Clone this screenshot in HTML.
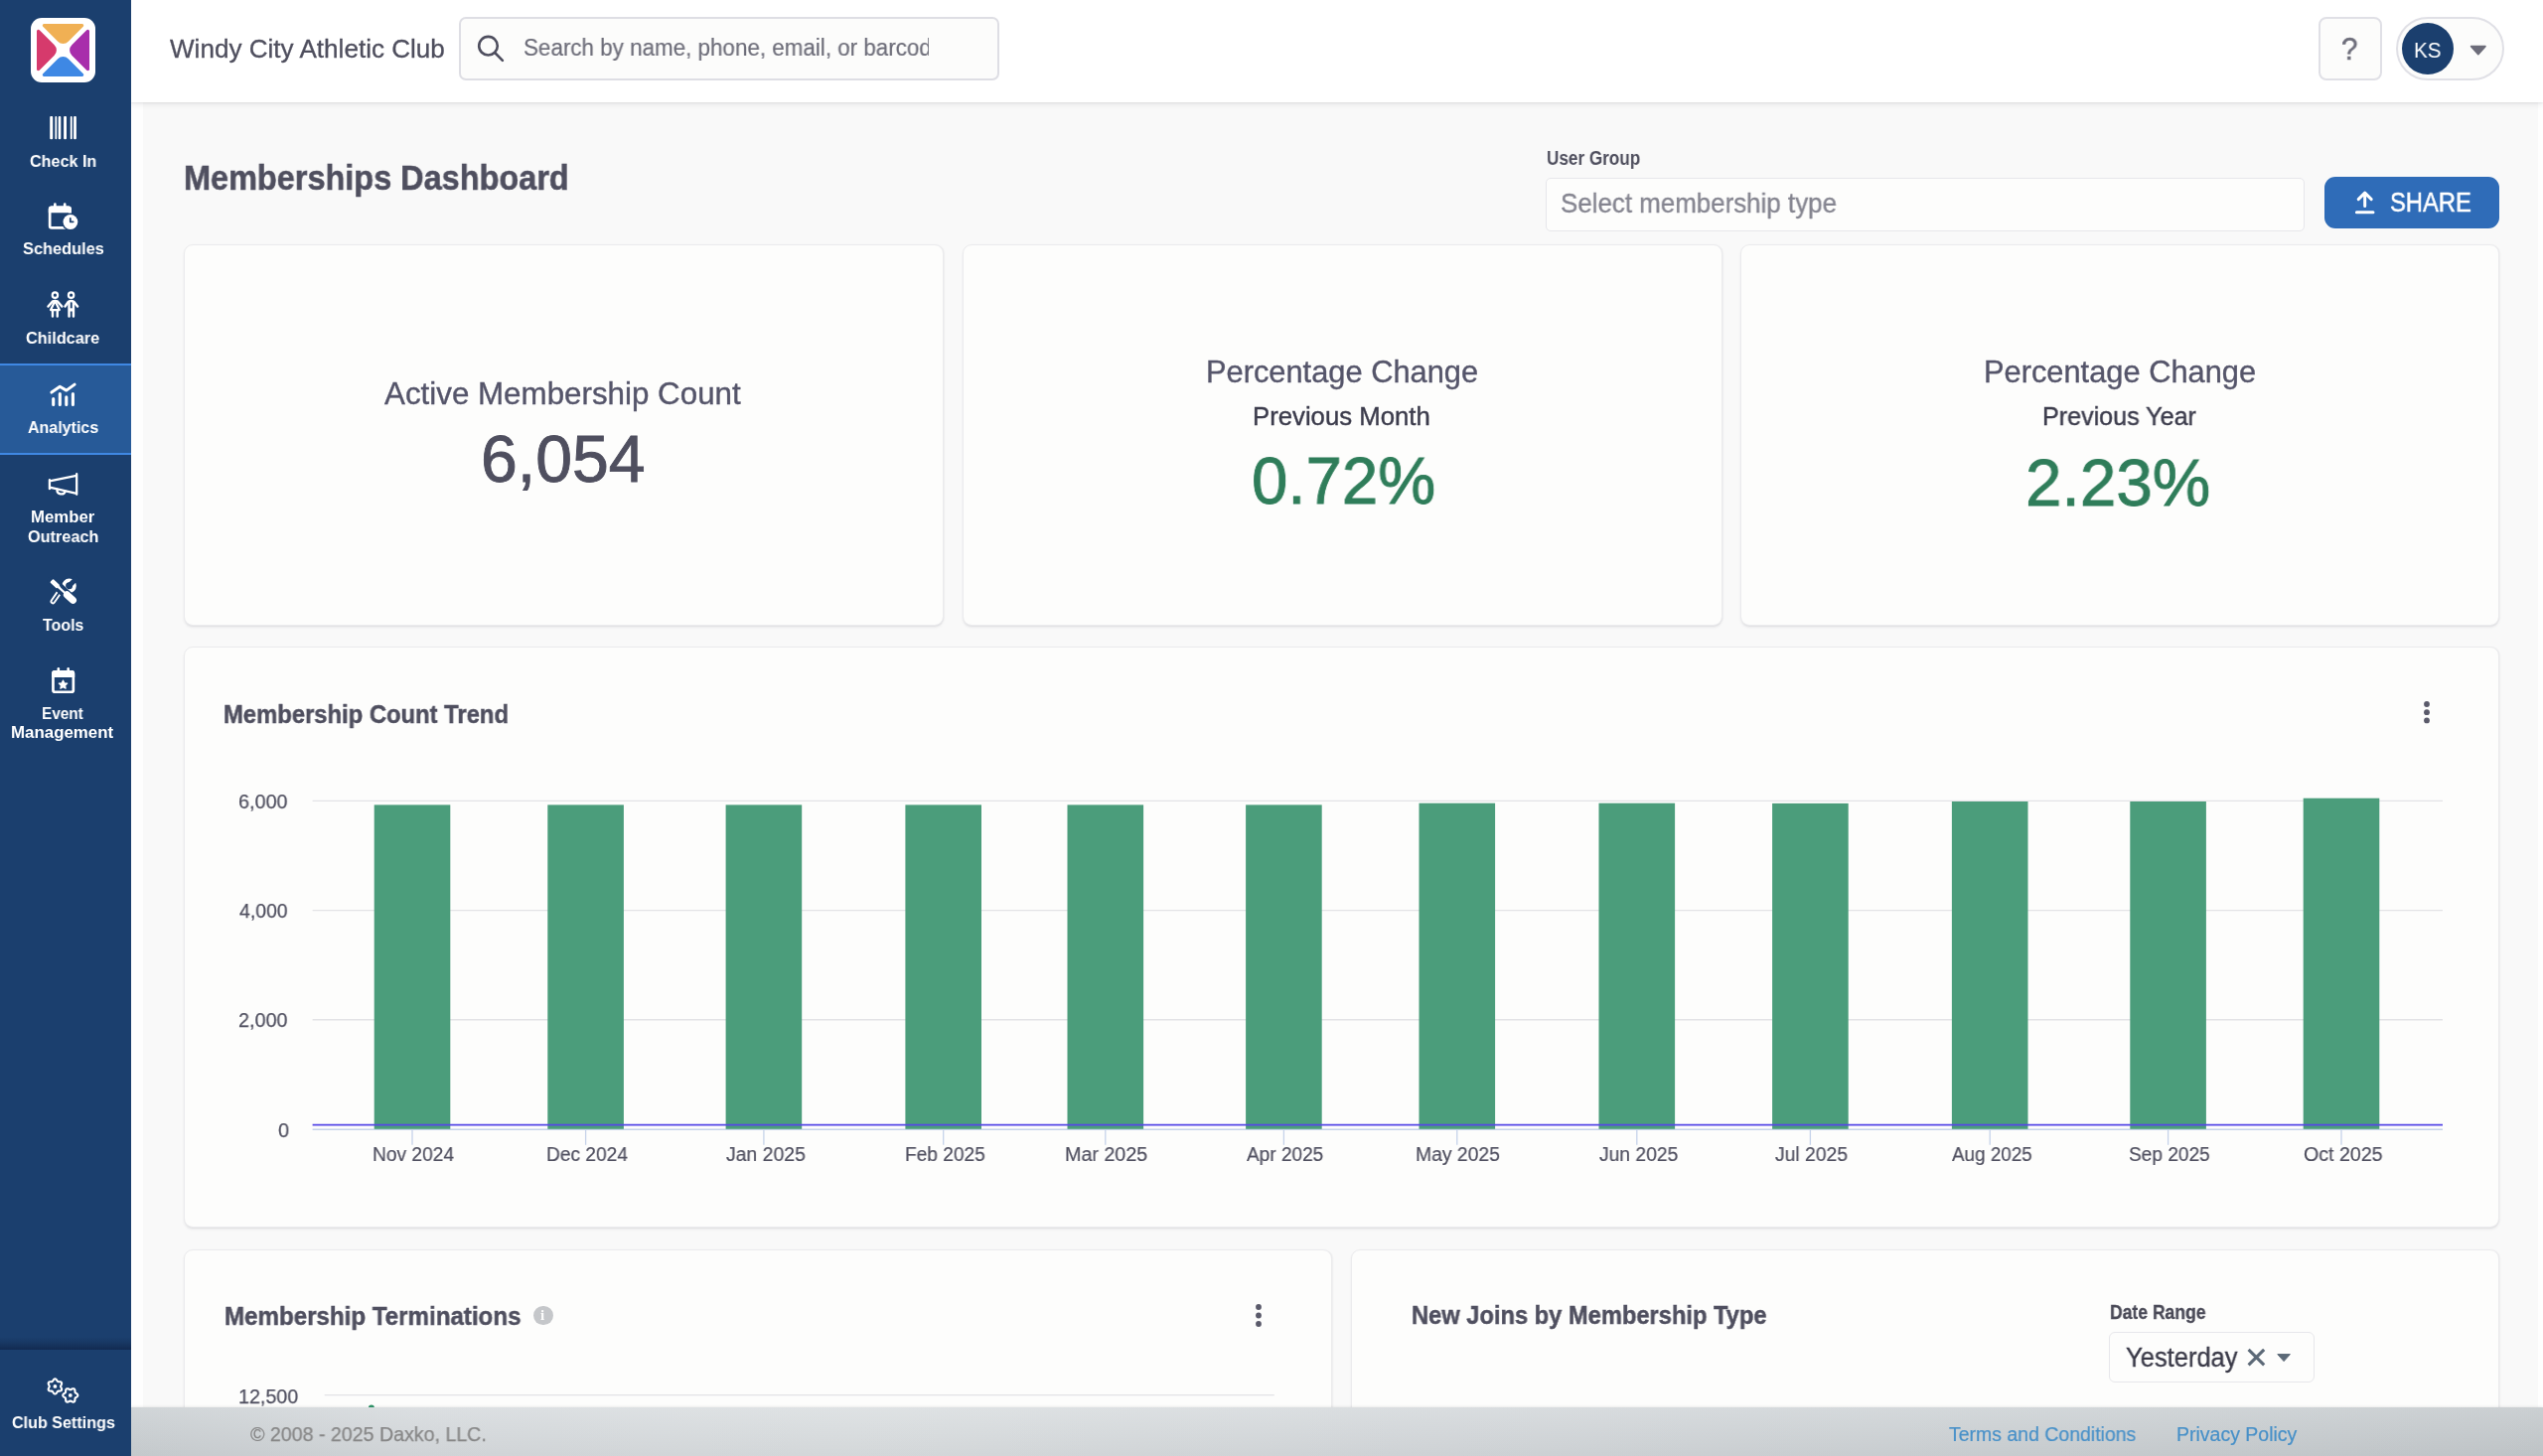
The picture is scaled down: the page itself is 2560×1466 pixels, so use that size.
<!DOCTYPE html>
<html lang="en">
<head>
<meta charset="utf-8">
<title>Memberships Dashboard - Windy City Athletic Club</title>
<style>
html,body{margin:0;padding:0;background:#fff;}
body{width:2560px;height:1466px;overflow:hidden;font-family:"Liberation Sans",Arial,Helvetica,sans-serif;}
#app{position:relative;width:2560px;height:1466px;overflow:hidden;background:#fefefe;}
#app *{box-sizing:border-box;}
.a{position:absolute;}
.t{will-change:transform;text-decoration:none;font-style:normal;position:absolute;white-space:nowrap;line-height:1;transform-origin:0 0;display:block;margin:0;padding:0;letter-spacing:0;}
svg{position:absolute;overflow:visible;}
/* layout blocks */
.mainbg{left:144px;top:102px;width:2411px;height:1316px;background:#f9f9f9;}
.topbar{left:132px;top:0;width:2428px;height:102.5px;background:#ffffff;box-shadow:0 1px 2px rgba(40,40,60,.07),0 2px 7px rgba(40,40,60,.09);}
.sidebar{left:0;top:0;width:132px;height:1466px;background:#1b3f6e;}
.navactive{left:0;top:366px;width:132px;height:92px;background:#275a98;border-top:2.5px solid #3f88e3;border-bottom:2.5px solid #3f88e3;}
.sidefoot{left:0;top:1346px;width:132px;height:12.5px;background:linear-gradient(to bottom,rgba(9,22,52,0) 0%,rgba(9,22,52,.18) 45%,rgba(9,22,52,.5) 100%);}
.logo{left:31px;top:18px;width:65px;height:65px;border-radius:11px;background:#fff;}
.search{left:462px;top:17px;width:544px;height:64px;border:2px solid #dedee4;border-radius:7px;background:#fcfcfb;}
.helpbtn{left:2334px;top:17px;width:64px;height:64px;border:2px solid #e0e0e6;border-radius:8px;background:#fcfcfb;}
.userpill{left:2412px;top:17px;width:108.5px;height:64px;border:2px solid #e0e0e6;border-radius:32px;background:#fcfcfb;}
.avatar{left:2418px;top:23px;width:52px;height:52px;border-radius:50%;background:#1b3f6e;}
.selbox{left:1556px;top:178.5px;width:764px;height:54px;border:1.5px solid #e7e7eb;border-radius:5px;background:#fdfdfc;}
.sharebtn{left:2340px;top:178px;width:176px;height:52px;border-radius:11px;background:#2f6cb8;}
.card{background:#fdfdfc;border:1px solid #ebebed;border-radius:9px;box-shadow:0 2px 3px -1px rgba(40,40,60,.15),1px 0 2px -1px rgba(40,40,60,.10);}
.k1{left:185px;top:246px;width:764.5px;height:384px;}
.k2{left:969px;top:246px;width:764.5px;height:384px;}
.k3{left:1752px;top:246px;width:763.5px;height:384px;}
.chart{left:185px;top:651px;width:2330.5px;height:585px;}
.term{left:185px;top:1258px;width:1155.5px;height:260px;}
.joins{left:1360px;top:1258px;width:1155.5px;height:260px;}
.datesel{left:2123px;top:1341px;width:206.5px;height:51px;border:1.5px solid #e7e7eb;border-radius:6px;background:#fdfdfc;}
.footer{left:132px;top:1417px;width:2428px;height:49px;background:linear-gradient(to bottom,rgba(255,255,255,.10),rgba(0,0,0,.035)),linear-gradient(to right,#cbd0d3 0%,#d7dbde 12%,#dbdfe1 30%,#d5d9dc 55%,#cdd2d5 80%,#c5cacd 100%);box-shadow:0 -1px 2px rgba(0,0,0,.07);}
.clip{overflow:hidden;}
</style>
</head>
<body>
<div id="app">

<main>
  <div class="a mainbg"></div>
  <h1 class="t" id="title" style="left:184.58px;top:160.76px;font-size:35.25px;font-weight:700;color:#4f4f5f;transform:scaleX(0.9206);-webkit-text-stroke-width:0.5px;">Memberships Dashboard</h1>
  <label><span class="t" id="ug" style="left:1556.59px;top:148.87px;font-size:20px;font-weight:700;color:#4e4e5d;transform:scaleX(0.8570);">User Group</span></label>
  <div class="a selbox"></div><span class="t" id="sel" style="left:1571.01px;top:190.98px;font-size:27.25px;font-weight:400;color:#858590;transform:scaleX(0.9508);-webkit-text-stroke-width:0.35px;">Select membership type</span>
  <div class="a sharebtn"></div><svg class="a" style="left:2368px;top:190px" width="26" height="28" viewBox="2368 190 26 28" ><g fill="none" stroke="#fff" stroke-width="3" stroke-linecap="round" stroke-linejoin="round"><path d="M2380.7,194.4 V207.6 M2374.2,200.6 L2380.7,194.1 L2387.2,200.6 M2372.4,213.7 H2389"/></g></svg><span class="t" id="share" style="left:2406.41px;top:189.82px;font-size:27.5px;font-weight:400;color:#ffffff;transform:scaleX(0.8638);-webkit-text-stroke:0.5px #fff;">SHARE</span>

  <section>
    <div class="a card k1"></div><span class="t" id="k1l" style="left:387.24px;top:380.78px;font-size:30.5px;font-weight:400;color:#55556a;transform:scaleX(1.0272);-webkit-text-stroke-width:0.35px;">Active Membership Count</span><strong class="t" id="k1v" style="left:484.25px;top:428.59px;font-size:66px;font-weight:400;color:#4f4f5f;transform:scaleX(1.0022);-webkit-text-stroke-width:0.9px;">6,054</strong>
    <div class="a card k2"></div><span class="t" id="k2l" style="left:1214.06px;top:359.67px;font-size:30.75px;font-weight:400;color:#55556a;transform:scaleX(1.0020);-webkit-text-stroke-width:0.35px;">Percentage Change</span><span class="t" id="k2s" style="left:1260.70px;top:406.71px;font-size:25.5px;font-weight:400;color:#3c3c4c;transform:scaleX(1.0090);-webkit-text-stroke-width:0.4px;">Previous Month</span><strong class="t" id="k2v" style="left:1259.83px;top:450.44px;font-size:67px;font-weight:400;color:#2f7d5a;transform:scaleX(0.9744);-webkit-text-stroke-width:0.9px;">0.72%</strong>
    <div class="a card k3"></div><span class="t" id="k3l" style="left:1997.26px;top:359.67px;font-size:30.75px;font-weight:400;color:#55556a;transform:scaleX(1.0020);-webkit-text-stroke-width:0.35px;">Percentage Change</span><span class="t" id="k3s" style="left:2055.75px;top:406.71px;font-size:25.5px;font-weight:400;color:#3c3c4c;transform:scaleX(0.9846);-webkit-text-stroke-width:0.4px;">Previous Year</span><strong class="t" id="k3v" style="left:2039.48px;top:451.54px;font-size:67px;font-weight:400;color:#2f7d5a;transform:scaleX(0.9795);-webkit-text-stroke-width:0.9px;">2.23%</strong>
  </section>

  <section>
    <div class="a card chart"></div>
    <h2 class="t" id="c1t" style="left:225.23px;top:706.59px;font-size:25.0px;font-weight:700;color:#4f4f5f;transform:scaleX(0.9521);-webkit-text-stroke-width:0.45px;">Membership Count Trend</h2><svg class="a" style="left:2438.6px;top:705.2px" width="8" height="24.399999999999977" viewBox="2438.6 705.2 8 24.399999999999977" ><circle cx="2442.6" cy="709.2" r="2.9" fill="#5a5a6a"/><circle cx="2442.6" cy="717.4" r="2.9" fill="#5a5a6a"/><circle cx="2442.6" cy="725.6" r="2.9" fill="#5a5a6a"/></svg>
    <svg class="a" style="left:186px;top:760px" width="2330" height="420" viewBox="186 760 2330 420" ><line x1="314.6" x2="2459" y1="806.4" y2="806.4" stroke="#e3e3e6" stroke-width="1.4"/><line x1="314.6" x2="2459" y1="916.6" y2="916.6" stroke="#e3e3e6" stroke-width="1.4"/><line x1="314.6" x2="2459" y1="1026.8" y2="1026.8" stroke="#e3e3e6" stroke-width="1.4"/><line x1="314.6" x2="2459" y1="1137.3" y2="1137.3" stroke="#c6d3ea" stroke-width="1.4"/><line x1="415" x2="415" y1="1137.3" y2="1152.8" stroke="#c6d3ea" stroke-width="1.3"/><line x1="589.6" x2="589.6" y1="1137.3" y2="1152.8" stroke="#c6d3ea" stroke-width="1.3"/><line x1="768.9" x2="768.9" y1="1137.3" y2="1152.8" stroke="#c6d3ea" stroke-width="1.3"/><line x1="949.7" x2="949.7" y1="1137.3" y2="1152.8" stroke="#c6d3ea" stroke-width="1.3"/><line x1="1112.8" x2="1112.8" y1="1137.3" y2="1152.8" stroke="#c6d3ea" stroke-width="1.3"/><line x1="1292.4" x2="1292.4" y1="1137.3" y2="1152.8" stroke="#c6d3ea" stroke-width="1.3"/><line x1="1466.8" x2="1466.8" y1="1137.3" y2="1152.8" stroke="#c6d3ea" stroke-width="1.3"/><line x1="1647.8" x2="1647.8" y1="1137.3" y2="1152.8" stroke="#c6d3ea" stroke-width="1.3"/><line x1="1822.4" x2="1822.4" y1="1137.3" y2="1152.8" stroke="#c6d3ea" stroke-width="1.3"/><line x1="2003.2" x2="2003.2" y1="1137.3" y2="1152.8" stroke="#c6d3ea" stroke-width="1.3"/><line x1="2182.6" x2="2182.6" y1="1137.3" y2="1152.8" stroke="#c6d3ea" stroke-width="1.3"/><line x1="2357" x2="2357" y1="1137.3" y2="1152.8" stroke="#c6d3ea" stroke-width="1.3"/><rect x="376.7" y="810.4" width="76.6" height="326.4" fill="#4b9d7b"/><rect x="551.3" y="810.4" width="76.6" height="326.4" fill="#4b9d7b"/><rect x="730.6" y="810.4" width="76.6" height="326.4" fill="#4b9d7b"/><rect x="911.4" y="810.4" width="76.6" height="326.4" fill="#4b9d7b"/><rect x="1074.5" y="810.4" width="76.6" height="326.4" fill="#4b9d7b"/><rect x="1254.1" y="810.4" width="76.6" height="326.4" fill="#4b9d7b"/><rect x="1428.5" y="808.7" width="76.6" height="328.1" fill="#4b9d7b"/><rect x="1609.5" y="808.7" width="76.6" height="328.1" fill="#4b9d7b"/><rect x="1784.1" y="808.9" width="76.6" height="327.9" fill="#4b9d7b"/><rect x="1964.9" y="807" width="76.6" height="329.8" fill="#4b9d7b"/><rect x="2144.3" y="807" width="76.6" height="329.8" fill="#4b9d7b"/><rect x="2318.7" y="803.7" width="76.6" height="333.1" fill="#4b9d7b"/><line x1="314.6" x2="2459" y1="1132.6" y2="1132.6" stroke="#5647e6" stroke-width="1.9"/></svg>
    <span class="t" id="y6" style="left:240.24px;top:795.62px;font-size:21.0px;font-weight:400;color:#4f4f5f;transform:scaleX(0.9440);-webkit-text-stroke-width:0.25px;">6,000</span><span class="t" id="y4" style="left:241.00px;top:906.42px;font-size:21.0px;font-weight:400;color:#4f4f5f;transform:scaleX(0.9260);-webkit-text-stroke-width:0.25px;">4,000</span><span class="t" id="y2" style="left:240.39px;top:1016.22px;font-size:21.0px;font-weight:400;color:#4f4f5f;transform:scaleX(0.9431);-webkit-text-stroke-width:0.25px;">2,000</span><span class="t" id="y0" style="left:279.66px;top:1127.02px;font-size:21.0px;font-weight:400;color:#4f4f5f;transform:scaleX(0.9453);-webkit-text-stroke-width:0.25px;">0</span>
    <span class="t" id="xNov" style="left:375.49px;top:1152.07px;font-size:20px;font-weight:400;color:#4f4f5f;transform:scaleX(0.9586);-webkit-text-stroke-width:0.2px;">Nov 2024</span><span class="t" id="xDec" style="left:550.01px;top:1152.07px;font-size:20px;font-weight:400;color:#4f4f5f;transform:scaleX(0.9575);-webkit-text-stroke-width:0.2px;">Dec 2024</span><span class="t" id="xJan" style="left:730.71px;top:1152.07px;font-size:20px;font-weight:400;color:#4f4f5f;transform:scaleX(0.9700);-webkit-text-stroke-width:0.2px;">Jan 2025</span><span class="t" id="xFeb" style="left:911.01px;top:1152.07px;font-size:20px;font-weight:400;color:#4f4f5f;transform:scaleX(0.9551);-webkit-text-stroke-width:0.2px;">Feb 2025</span><span class="t" id="xMar" style="left:1071.93px;top:1152.07px;font-size:20px;font-weight:400;color:#4f4f5f;transform:scaleX(0.9852);-webkit-text-stroke-width:0.2px;">Mar 2025</span><span class="t" id="xApr" style="left:1255.46px;top:1152.07px;font-size:20px;font-weight:400;color:#4f4f5f;transform:scaleX(0.9512);-webkit-text-stroke-width:0.2px;">Apr 2025</span><span class="t" id="xMay" style="left:1424.95px;top:1152.07px;font-size:20px;font-weight:400;color:#4f4f5f;transform:scaleX(0.9668);-webkit-text-stroke-width:0.2px;">May 2025</span><span class="t" id="xJun" style="left:1610.21px;top:1152.07px;font-size:20px;font-weight:400;color:#4f4f5f;transform:scaleX(0.9634);-webkit-text-stroke-width:0.2px;">Jun 2025</span><span class="t" id="xJul" style="left:1787.20px;top:1152.07px;font-size:20px;font-weight:400;color:#4f4f5f;transform:scaleX(0.9663);-webkit-text-stroke-width:0.2px;">Jul 2025</span><span class="t" id="xAug" style="left:1964.95px;top:1152.07px;font-size:20px;font-weight:400;color:#4f4f5f;transform:scaleX(0.9423);-webkit-text-stroke-width:0.2px;">Aug 2025</span><span class="t" id="xSep" style="left:2143.29px;top:1152.07px;font-size:20px;font-weight:400;color:#4f4f5f;transform:scaleX(0.9540);-webkit-text-stroke-width:0.2px;">Sep 2025</span><span class="t" id="xOct" style="left:2318.83px;top:1152.07px;font-size:20px;font-weight:400;color:#4f4f5f;transform:scaleX(0.9801);-webkit-text-stroke-width:0.2px;">Oct 2025</span>
  </section>

  <section>
    <div class="a card term"></div>
    <h2 class="t" id="c2t" style="left:226.24px;top:1313.04px;font-size:25.0px;font-weight:700;color:#4f4f5f;transform:scaleX(0.9649);-webkit-text-stroke-width:0.45px;">Membership Terminations</h2>
    <div class="a" style="left:537.3px;top:1314.5px;width:19.8px;height:19.8px;border-radius:50%;background:#c5c7ca;"></div>
    <span class="t" style="left:544.4px;top:1316.6px;font-size:15px;font-weight:700;color:#fdfdfc;font-family:'Liberation Serif',serif;">i</span>
    <svg class="a" style="left:1263.2px;top:1311.9px" width="8" height="25.0" viewBox="1263.2 1311.9 8 25.0" ><circle cx="1267.2" cy="1315.9" r="2.9" fill="#5a5a6a"/><circle cx="1267.2" cy="1324.4" r="2.9" fill="#5a5a6a"/><circle cx="1267.2" cy="1332.9" r="2.9" fill="#5a5a6a"/></svg>
    <svg class="a" style="left:300px;top:1396px" width="1000" height="30" viewBox="300 1396 1000 30" ><line x1="326.7" x2="1282.8" y1="1404.6" y2="1404.6" stroke="#e3e3e6" stroke-width="1.4"/><circle cx="373.9" cy="1417.5" r="3" fill="#2f9469"/></svg>
    <span class="t" id="y125" style="left:240.33px;top:1394.52px;font-size:21.0px;font-weight:400;color:#4f4f5f;transform:scaleX(0.9386);-webkit-text-stroke-width:0.25px;">12,500</span>
  </section>

  <section>
    <div class="a card joins"></div>
    <h2 class="t" id="c3t" style="left:1420.94px;top:1312.34px;font-size:25.0px;font-weight:700;color:#4f4f5f;transform:scaleX(0.9473);-webkit-text-stroke-width:0.45px;">New Joins by Membership Type</h2>
    <label><span class="t" id="dr" style="left:2124.14px;top:1310.77px;font-size:20px;font-weight:700;color:#4a4a57;transform:scaleX(0.8767);-webkit-text-stroke-width:0.3px;">Date Range</span></label>
    <div class="a datesel"></div><span class="t" id="yest" style="left:2139.77px;top:1353.21px;font-size:27.75px;font-weight:400;color:#3a3a48;transform:scaleX(0.9193);-webkit-text-stroke-width:0.35px;">Yesterday</span><svg class="a" style="left:2260px;top:1356px" width="24" height="22" viewBox="2260 1356 24 22" ><path d="M2263.6,1358.8 L2279.2,1374.4 M2279.2,1358.8 L2263.6,1374.4" stroke="#5c6977" stroke-width="3.1" fill="none"/></svg><svg class="a" style="left:2290px;top:1360px" width="18" height="12" viewBox="2290 1360 18 12" ><path d="M2292.8,1363.6 H2305.4 L2299.1,1370.6 Z" fill="#5c6977" stroke="#5c6977" stroke-width="1" stroke-linejoin="round"/></svg>
  </section>
</main>

<footer>
  <div class="a footer"></div>
  <span class="t" id="copy" style="left:252.00px;top:1435.03px;font-size:19.75px;font-weight:400;color:#868686;transform:scaleX(0.9922);-webkit-text-stroke-width:0.25px;">© 2008 - 2025 Daxko, LLC.</span><a href="#" class="t" id="terms" style="left:1962.14px;top:1435.09px;font-size:19.5px;font-weight:400;color:#4790c8;transform:scaleX(0.9980);-webkit-text-stroke-width:0.2px;">Terms and Conditions</a><a href="#" class="t" id="priv" style="left:2190.58px;top:1435.09px;font-size:19.5px;font-weight:400;color:#4790c8;transform:scaleX(0.9968);-webkit-text-stroke-width:0.2px;">Privacy Policy</a>
</footer>

<header>
  <div class="a topbar"></div>
  <span class="t" id="club" style="left:171.03px;top:36.86px;font-size:25.5px;font-weight:400;color:#4f4f5e;transform:scaleX(1.0229);-webkit-text-stroke-width:0.3px;">Windy City Athletic Club</span>
  <div class="a search"></div><svg class="a" style="left:476px;top:32px" width="36" height="34" viewBox="476 32 36 34" ><g fill="none" stroke="#4e4e5e" stroke-width="2.6" stroke-linecap="round"><circle cx="491.5" cy="46.2" r="9.3"/><path d="M498.6,53.5 L505.9,60.8"/></g></svg><div class="a clip" style="left:520px;top:20px;width:415.2px;height:58px;"><span class="t" id="srch" style="left:7.04px;top:17.03px;font-size:23px;font-weight:400;color:#6d6d79;transform:scaleX(0.9738);-webkit-text-stroke-width:0.2px;">Search by name, phone, email, or barcode</span></div>
  <div class="a helpbtn"></div><span class="t" id="help" style="left:2357.01px;top:34.01px;font-size:31.0px;font-weight:400;color:#6d6d7a;transform:scaleX(0.9568);-webkit-text-stroke:0.5px #6d6d7a;">?</span>
  <div class="a userpill"></div><div class="a avatar"></div><span class="t" id="ks" style="left:2430.23px;top:39.59px;font-size:21.75px;font-weight:400;color:#ffffff;transform:scaleX(0.9485);">KS</span><svg class="a" style="left:2484px;top:44px" width="22" height="14" viewBox="2484 44 22 14" ><path d="M2487.6,46.6 H2502 L2494.8,54.6 Z" fill="#6d6d7a" stroke="#6d6d7a" stroke-width="1.6" stroke-linejoin="round"/></svg>
</header>

<nav>
  <div class="a sidebar"></div>
  <div class="a logo"></div><svg class="a" style="left:31px;top:18px" width="65" height="65" viewBox="31 18 65 65" ><path d="M43.23,26.73 A1.6,1.6 0 0 1 44.36,24.00 L82.64,24.00 A1.6,1.6 0 0 1 83.77,26.73 L68.80,41.70 A7.5,7.5 0 0 1 58.20,41.70 Z" fill="#f0b054"/><path d="M83.77,74.27 A1.6,1.6 0 0 1 82.64,77.00 L44.36,77.00 A1.6,1.6 0 0 1 43.23,74.27 L58.20,59.30 A7.5,7.5 0 0 1 68.80,59.30 Z" fill="#3e88e4"/><path d="M39.73,70.77 A1.6,1.6 0 0 1 37.00,69.64 L37.00,31.36 A1.6,1.6 0 0 1 39.73,30.23 L54.70,45.20 A7.5,7.5 0 0 1 54.70,55.80 Z" fill="#d63a6c"/><path d="M87.27,30.23 A1.6,1.6 0 0 1 90.00,31.36 L90.00,69.64 A1.6,1.6 0 0 1 87.27,70.77 L72.30,55.80 A7.5,7.5 0 0 1 72.30,45.20 Z" fill="#a82eab"/></svg>
  <svg class="a" style="left:44px;top:112px" width="40" height="34" viewBox="44 112 40 34" ><rect x="50.2" y="117" width="3.0" height="23.3" rx="1.1" fill="#fff"/><rect x="55.4" y="117" width="1.8" height="23.3" rx="1.1" fill="#fff"/><rect x="58.7" y="117" width="2.6" height="23.3" rx="1.1" fill="#fff"/><rect x="64.1" y="117" width="2.9" height="23.3" rx="1.1" fill="#fff"/><rect x="70.8" y="117" width="1.9" height="23.3" rx="1.1" fill="#fff"/><rect x="74.1" y="117" width="2.8" height="23.3" rx="1.1" fill="#fff"/></svg><a href="#" class="t" id="n1" style="left:29.74px;top:154.82px;font-size:16.75px;font-weight:700;color:#ffffff;transform:scaleX(0.9632);">Check In</a>
  <svg class="a" style="left:44px;top:200px" width="40" height="36" viewBox="44 200 40 36" ><rect x="50.15" y="208.95" width="20.4" height="20.5" rx="1.9" fill="none" stroke="#fff" stroke-width="2.7"/><path d="M48.8,214.3 V210.6 a3,3 0 0 1 3,-3 H68.9 a3,3 0 0 1 3,3 V214.3 Z" fill="#fff"/><rect x="54" y="204.3" width="2.7" height="6" rx="1.35" fill="#fff"/><rect x="63.85" y="204.3" width="2.7" height="6" rx="1.35" fill="#fff"/><circle cx="70.9" cy="223.5" r="8.9" fill="#1b3f6e"/><circle cx="70.9" cy="223.5" r="7.4" fill="#fff"/><path d="M70.8,219.9 V223.3 H73.7" fill="none" stroke="#1b3f6e" stroke-width="1.8" stroke-linecap="round" stroke-linejoin="round"/></svg><a href="#" class="t" id="n2" style="left:23.04px;top:243.22px;font-size:16.75px;font-weight:700;color:#ffffff;transform:scaleX(0.9760);">Schedules</a>
  <svg class="a" style="left:44px;top:290px" width="40" height="34" viewBox="44 290 40 34" ><g fill="none" stroke="#fff" stroke-linecap="round" stroke-linejoin="round"><circle cx="55.4" cy="297.15" r="2.7" stroke-width="2.2"/><circle cx="71.6" cy="297.15" r="2.7" stroke-width="2.2"/><path d="M48.5,308.5 L52.7,303.7 Q55.4,302.3 58.1,303.7 L62.3,308.5" stroke-width="2.5"/><path d="M55.4,303.0 L51.0,312.1 H59.8 Z" stroke-width="2.2"/><path d="M52.95,313 V318.6 M57.75,313 V318.6" stroke-width="2.4"/><path d="M65.5,308.5 L68.9,303.8 Q71.6,302.3 74.3,303.8 L78.1,308.5" stroke-width="2.5"/><path d="M69.55,304.2 V318.6 M73.95,304.2 V318.6" stroke-width="2.5"/><path d="M69.55,311.9 H73.95" stroke-width="3.2" stroke-linecap="butt"/></g></svg><a href="#" class="t" id="n3" style="left:25.99px;top:332.82px;font-size:16.75px;font-weight:700;color:#ffffff;transform:scaleX(0.9721);">Childcare</a>
  <div class="a navactive"></div><svg class="a" style="left:44px;top:380px" width="40" height="34" viewBox="44 380 40 34" ><g fill="none" stroke="#fff" stroke-linecap="round" stroke-linejoin="round" stroke-width="3"><path d="M51.9,395.1 L60.3,389.3 L66.8,393.1 L75.1,387.1"/><path d="M53.7,401.6 V407.4 M60.3,396.5 V407.4 M66.8,399.7 V407.4 M73.4,396.5 V407.4" stroke-width="3.1"/></g></svg><a href="#" class="t" id="n4" style="left:27.85px;top:423.42px;font-size:16.75px;font-weight:700;color:#ffffff;transform:scaleX(0.9554);">Analytics</a>
  <svg class="a" style="left:44px;top:470px" width="40" height="34" viewBox="44 470 40 34" ><g fill="none" stroke="#fff" stroke-linecap="round" stroke-linejoin="round" stroke-width="2.3"><path d="M49.9,483.2 V492.2 M77.2,477.2 V497.8 M50,484.4 L77,478.8 M50,490.6 L77,496.8"/><path d="M57.5,492.6 a4.3,4.3 0 0 0 8.3,2.0"/></g></svg><a href="#" class="t" id="n5a" style="left:31.16px;top:512.82px;font-size:16.75px;font-weight:700;color:#ffffff;transform:scaleX(0.9963);">Member</a><a href="#" class="t" id="n5b" style="left:27.70px;top:533.22px;font-size:16.75px;font-weight:700;color:#ffffff;transform:scaleX(0.9711);">Outreach</a>
  <svg class="a" style="left:44px;top:578px" width="40" height="36" viewBox="44 578 40 36" ><g fill="none" stroke-linecap="round" stroke-linejoin="round"><path d="M59.6,596.4 L53.3,605.5" stroke="#fff" stroke-width="5.5"/><path d="M59.6,596.4 L53.3,605.5" stroke="#1b3f6e" stroke-width="1.7"/><circle cx="69.6" cy="589.8" r="5.35" stroke="#fff" stroke-width="3.7"/><path d="M70.4,589.0 L78.5,580.9" stroke="#1b3f6e" stroke-width="5.0" stroke-linecap="butt"/><path d="M63.9,595.6 L66.2,593.3" stroke="#fff" stroke-width="3.4"/><path d="M52.2,585.0 L58.4,590.6 L65.6,597.2 L67.4,598.8 L73.6,604.5" stroke="#1b3f6e" stroke-width="9.4"/></g><rect x="-4.7" y="-2.35" width="9.4" height="4.7" rx="1.1" transform="translate(55.25,587.75) rotate(42)" fill="#fff"/><path d="M57.6,591.9 L59.9,589.4 L61.2,592.6 Z" fill="#fff"/><path d="M58.6,590.9 L65.6,597.3" stroke="#fff" stroke-width="2.2" fill="none"/><path d="M67.4,598.8 L73.5,604.4" stroke="#fff" stroke-width="7.0" stroke-linecap="round" fill="none"/><path d="M64.6,596.3 L66.0,600.6 L69.6,596.9 Z" fill="#fff" stroke="#fff" stroke-width="1" stroke-linejoin="round"/></svg><a href="#" class="t" id="n6" style="left:42.70px;top:622.22px;font-size:16.75px;font-weight:700;color:#ffffff;transform:scaleX(0.9528);">Tools</a>
  <svg class="a" style="left:44px;top:668px" width="40" height="36" viewBox="44 668 40 36" ><rect x="53.45" y="676.35" width="20.4" height="20.4" rx="1.8" fill="none" stroke="#fff" stroke-width="2.7"/><path d="M52.1,682 V678 a3,3 0 0 1 3,-3 H72.2 a3,3 0 0 1 3,3 V682 Z" fill="#fff"/><rect x="57.55" y="671.9" width="2.5" height="6" rx="1.25" fill="#fff"/><rect x="67.45" y="671.9" width="2.5" height="6" rx="1.25" fill="#fff"/><polygon points="63.50,685.00 64.82,687.68 67.78,688.11 65.64,690.20 66.15,693.14 63.50,691.75 60.85,693.14 61.36,690.20 59.22,688.11 62.18,687.68" fill="#fff" stroke="#fff" stroke-width="1.1" stroke-linejoin="round"/></svg><a href="#" class="t" id="n7a" style="left:41.79px;top:711.22px;font-size:16.75px;font-weight:700;color:#ffffff;transform:scaleX(0.9153);">Event</a><a href="#" class="t" id="n7b" style="left:11.46px;top:729.82px;font-size:16.75px;font-weight:700;color:#ffffff;transform:scaleX(1.0077);">Management</a>
  <div class="a sidefoot"></div><svg class="a" style="left:44px;top:1384px" width="40" height="34" viewBox="44 1384 40 34" ><g fill="none" stroke="#fff" stroke-width="2.1" stroke-linejoin="round"><path d="M61.05,1395.90 L61.11,1395.53 L61.28,1395.13 L61.52,1394.68 L61.78,1394.19 L61.99,1393.66 L62.12,1393.12 L62.11,1392.59 L61.94,1392.12 L61.62,1391.75 L61.17,1391.47 L60.64,1391.31 L60.07,1391.23 L59.51,1391.21 L59.01,1391.20 L58.58,1391.14 L58.23,1391.01 L57.93,1390.77 L57.67,1390.42 L57.40,1389.99 L57.11,1389.52 L56.76,1389.07 L56.35,1388.69 L55.89,1388.44 L55.40,1388.35 L54.91,1388.44 L54.45,1388.69 L54.04,1389.07 L53.69,1389.52 L53.40,1389.99 L53.13,1390.42 L52.87,1390.77 L52.58,1391.01 L52.22,1391.14 L51.79,1391.20 L51.29,1391.21 L50.73,1391.23 L50.16,1391.31 L49.63,1391.47 L49.18,1391.75 L48.86,1392.12 L48.69,1392.59 L48.68,1393.12 L48.81,1393.66 L49.02,1394.19 L49.28,1394.68 L49.52,1395.13 L49.69,1395.53 L49.75,1395.90 L49.69,1396.27 L49.52,1396.67 L49.28,1397.12 L49.02,1397.61 L48.81,1398.14 L48.68,1398.68 L48.69,1399.21 L48.86,1399.68 L49.18,1400.05 L49.63,1400.33 L50.16,1400.49 L50.73,1400.57 L51.29,1400.59 L51.79,1400.60 L52.22,1400.66 L52.57,1400.79 L52.87,1401.03 L53.13,1401.38 L53.40,1401.81 L53.69,1402.28 L54.04,1402.73 L54.45,1403.11 L54.91,1403.36 L55.40,1403.45 L55.89,1403.36 L56.35,1403.11 L56.76,1402.73 L57.11,1402.28 L57.40,1401.81 L57.67,1401.38 L57.93,1401.03 L58.23,1400.79 L58.58,1400.66 L59.01,1400.60 L59.51,1400.59 L60.07,1400.57 L60.64,1400.49 L61.17,1400.33 L61.62,1400.05 L61.94,1399.68 L62.11,1399.21 L62.12,1398.68 L61.99,1398.14 L61.78,1397.61 L61.52,1397.12 L61.28,1396.67 L61.11,1396.27Z"/><path d="M78.35,1404.90 L78.26,1404.41 L78.01,1403.95 L77.63,1403.54 L77.18,1403.19 L76.71,1402.90 L76.28,1402.63 L75.93,1402.37 L75.69,1402.08 L75.56,1401.72 L75.50,1401.29 L75.49,1400.79 L75.47,1400.23 L75.39,1399.66 L75.23,1399.13 L74.95,1398.68 L74.58,1398.36 L74.11,1398.19 L73.58,1398.18 L73.04,1398.31 L72.51,1398.52 L72.02,1398.78 L71.57,1399.02 L71.17,1399.19 L70.80,1399.25 L70.43,1399.19 L70.03,1399.02 L69.58,1398.78 L69.09,1398.52 L68.56,1398.31 L68.02,1398.18 L67.49,1398.19 L67.03,1398.36 L66.65,1398.68 L66.37,1399.13 L66.21,1399.66 L66.13,1400.23 L66.11,1400.79 L66.10,1401.29 L66.04,1401.72 L65.91,1402.08 L65.67,1402.37 L65.32,1402.63 L64.89,1402.90 L64.42,1403.19 L63.97,1403.54 L63.59,1403.95 L63.34,1404.41 L63.25,1404.90 L63.34,1405.39 L63.59,1405.85 L63.97,1406.26 L64.42,1406.61 L64.89,1406.90 L65.32,1407.17 L65.67,1407.43 L65.91,1407.73 L66.04,1408.08 L66.10,1408.51 L66.11,1409.01 L66.13,1409.57 L66.21,1410.14 L66.37,1410.67 L66.65,1411.12 L67.02,1411.44 L67.49,1411.61 L68.02,1411.62 L68.56,1411.49 L69.09,1411.28 L69.58,1411.02 L70.03,1410.78 L70.43,1410.61 L70.80,1410.55 L71.17,1410.61 L71.57,1410.78 L72.02,1411.02 L72.51,1411.28 L73.04,1411.49 L73.58,1411.62 L74.11,1411.61 L74.58,1411.44 L74.95,1411.12 L75.23,1410.67 L75.39,1410.14 L75.47,1409.57 L75.49,1409.01 L75.50,1408.51 L75.56,1408.08 L75.69,1407.73 L75.93,1407.43 L76.28,1407.17 L76.71,1406.90 L77.18,1406.61 L77.63,1406.26 L78.01,1405.85 L78.26,1405.39Z"/></g><circle cx="55.4" cy="1395.9" r="1.9" fill="#fff"/><circle cx="70.8" cy="1404.9" r="1.9" fill="#fff"/></svg><a href="#" class="t" id="n8" style="left:11.74px;top:1425.22px;font-size:16.75px;font-weight:700;color:#ffffff;transform:scaleX(0.9615);">Club Settings</a>
</nav>

</div>
</body></html>
